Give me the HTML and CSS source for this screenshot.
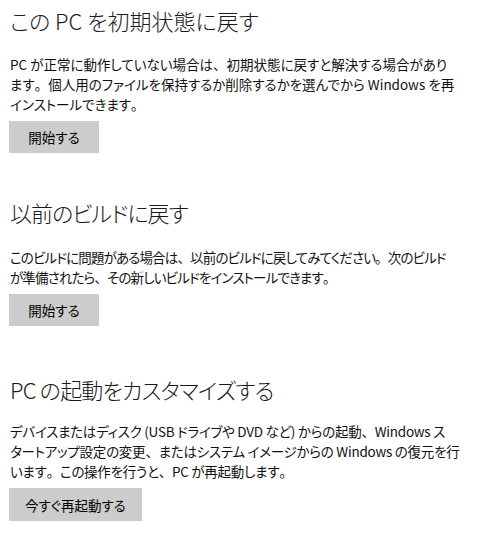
FILE: index.html
```html
<!DOCTYPE html>
<html lang="ja">
<head>
<meta charset="utf-8">
<link rel="stylesheet" href="styles.css">
</head>
<body>
<main class="page">
  <section class="sec">
    <h2 class="title">この PC を初期状態に戻す</h2>
    <p class="desc">PC が正常に動作していない場合は<span class="pu">、</span>初期状態に戻すと解決する場合があり<br>ます<span class="pu">。</span>個人用のファイルを保持するか削除するかを選んでから Windows を再<br>インストールできます<span class="pu">。</span></p>
    <button class="btn">開始する</button>
  </section>
  <section class="sec sec-2">
    <h2 class="title title-kana">以前のビルドに戻す</h2>
    <p class="desc">このビルドに問題がある場合は<span class="pu">、</span>以前のビルドに戻してみてください<span class="pu">。</span>次のビルド<br>が準備されたら<span class="pu">、</span>その新しいビルドをインストールできます<span class="pu">。</span></p>
    <button class="btn">開始する</button>
  </section>
  <section class="sec sec-3">
    <h2 class="title title-kana2">PC の起動をカスタマイズする</h2>
    <p class="desc">デバイスまたはディスク (USB ドライブや DVD など) からの起動<span class="pu">、</span>Windows ス<br>タートアップ設定の変更<span class="pu">、</span>またはシステム イメージからの Windows の復元を行<br>います<span class="pu">。</span>この操作を行うと<span class="pu">、</span>PC が再起動します<span class="pu">。</span></p>
    <button class="btn">今すぐ再起動する</button>
  </section>
</main>
</body>
</html>
```
FILE: styles.css
```css
html, body {
  margin: 0;
  padding: 0;
  background: #fff;
}
body {
  font-family: "Noto Sans CJK JP", "Noto Sans", sans-serif;
  color: #000;
  font-feature-settings: "palt" 1;
}
.page {
  padding: 5px 0 0 9px;
  display: flex;
  flex-direction: column;
  gap: 45px;
}
.sec {
  display: flex;
  flex-direction: column;
  align-items: flex-start;
}
.sec-2 {
  margin-top: -1px;
}
.sec-3 {
  margin-top: 3px;
}
.title {
  margin: 0 0 0 1px;
  font-size: 22px;
  line-height: 30px;
  font-weight: 300;
  color: #1a1a1a;
  white-space: nowrap;
}
.title-kana {
  letter-spacing: -1px;
}
.title-kana2 {
  letter-spacing: -0.8px;
}
.desc {
  margin: 19px 0 7px 1px;
  font-size: 13.5px;
  line-height: 20px;
  font-weight: 400;
  color: #111;
  white-space: nowrap;
}
.sec-2 .desc {
  margin-top: 20px;
  letter-spacing: -0.85px;
}
.sec-3 .desc {
  margin-top: 17px;
  letter-spacing: -0.25px;
}
.pu {
  font-feature-settings: normal;
}
.btn {
  border: none;
  background: #cccccc;
  color: #000;
  font-family: inherit;
  font-feature-settings: "palt" 1;
  font-size: 13.5px;
  height: 32px;
  padding: 0 16px;
  min-width: 90px;
}
.sec-3 .btn {
  height: 33px;
}
```
